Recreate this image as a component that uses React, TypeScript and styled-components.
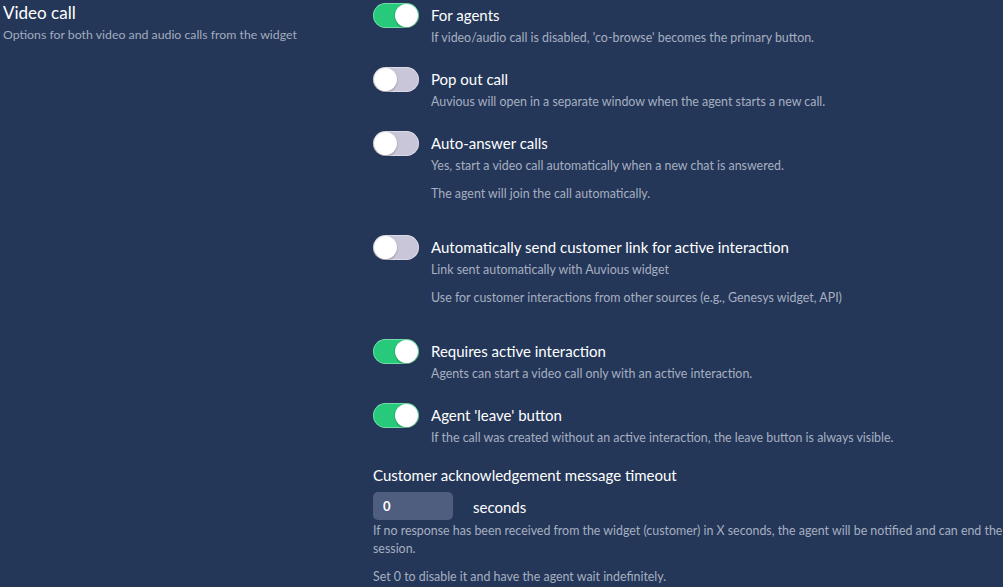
import { createGlobalStyle, styled } from "styled-components"

const GlobalStyle = createGlobalStyle`
  html, body {
    margin: 0;
    padding: 0;
    background: #243759;
  }
  body {
    font-family: Lato, "Noto Sans", sans-serif;
    color: #ffffff;
  }
  p {
    margin: 0;
  }
`

type Option = {
  label: string
  on: boolean
  notes: string[]
}

const options: Option[] = [
  {
    label: "For agents",
    on: true,
    notes: ["If video/audio call is disabled, 'co-browse' becomes the primary button."],
  },
  {
    label: "Pop out call",
    on: false,
    notes: ["Auvious will open in a separate window when the agent starts a new call."],
  },
  {
    label: "Auto-answer calls",
    on: false,
    notes: [
      "Yes, start a video call automatically when a new chat is answered.",
      "The agent will join the call automatically.",
    ],
  },
  {
    label: "Automatically send customer link for active interaction",
    on: false,
    notes: [
      "Link sent automatically with Auvious widget",
      "Use for customer interactions from other sources (e.g., Genesys widget, API)",
    ],
  },
  {
    label: "Requires active interaction",
    on: true,
    notes: ["Agents can start a video call only with an active interaction."],
  },
  {
    label: "Agent 'leave' button",
    on: true,
    notes: ["If the call was created without an active interaction, the leave button is always visible."],
  },
]

const App = () => {
  return (
    <>
      <GlobalStyle />
      <Page>
        <Intro>
          <h2>Video call</h2>
          <p>Options for both video and audio calls from the widget</p>
        </Intro>
        <Settings>
          {options.map((opt) => (
            <OptionRow key={opt.label} $multi={opt.notes.length > 1}>
              <Toggle $on={opt.on}>
                <Knob $on={opt.on} />
              </Toggle>
              <OptionText>
                <OptionLabel>{opt.label}</OptionLabel>
                {opt.notes.map((n) => (
                  <Note key={n}>{n}</Note>
                ))}
              </OptionText>
            </OptionRow>
          ))}
          <Timeout>
            <OptionLabel>Customer acknowledgement message timeout</OptionLabel>
            <InputRow>
              <NumberInput value="0" readOnly />
              <Unit>seconds</Unit>
            </InputRow>
            <Note>
              If no response has been received from the widget (customer) in X seconds, the agent
              will be notified and can end the session.
            </Note>
            <Note>Set 0 to disable it and have the agent wait indefinitely.</Note>
          </Timeout>
        </Settings>
      </Page>
    </>
  )
}

const Page = styled.div`
  display: grid;
  grid-template-columns: 370px 1fr;
  width: 1003px;
  height: 587px;
  overflow: hidden;
  padding-left: 3px;
  box-sizing: border-box;
`

const Intro = styled.div`
  padding-top: 2px;

  h2 {
    margin: 0;
    font-size: 17px;
    font-weight: 400;
    line-height: 22px;
    color: #ffffff;
  }

  p {
    margin-top: 2px;
    font-size: 12.3px;
    line-height: 18px;
    color: #a3abbd;
  }
`

const Settings = styled.div`
  display: flex;
  flex-direction: column;
  padding-top: 4px;
`

const OptionRow = styled.div<{ $multi: boolean }>`
  display: flex;
  align-items: flex-start;
  gap: 12px;
  margin-bottom: ${(p) => (p.$multi ? "23px" : "11px")};
`

const Toggle = styled.div<{ $on: boolean }>`
  position: relative;
  flex: none;
  width: 46px;
  height: 25px;
  margin-top: -1px;
  border-radius: 13px;
  background: ${(p) => (p.$on ? "#27c97b" : "#c9c6d9")};
  box-shadow: inset 0 0 0 1px rgba(255, 255, 255, 0.35);
`

const Knob = styled.span<{ $on: boolean }>`
  position: absolute;
  top: 1px;
  left: ${(p) => (p.$on ? "22px" : "1px")};
  width: 23px;
  height: 23px;
  border-radius: 50%;
  background: #ffffff;
  box-shadow: 0 1px 2px rgba(0, 0, 0, 0.3);
`

const OptionText = styled.div`
  display: flex;
  flex-direction: column;
`

const OptionLabel = styled.p`
  font-size: 15px;
  line-height: 22px;
  color: #ffffff;
  margin-bottom: 3px;
`

const Note = styled.p`
  font-size: 12.4px;
  line-height: 18px;
  color: #a7afc0;
  margin-bottom: 10px;
`

const Timeout = styled.div`
  display: flex;
  flex-direction: column;
  margin-top: -4px;

  ${OptionLabel} {
    margin-bottom: 6px;
  }
`

const InputRow = styled.div`
  display: flex;
  align-items: center;
  gap: 20px;
  margin-bottom: 2px;
`

const NumberInput = styled.input`
  width: 80px;
  height: 28px;
  box-sizing: border-box;
  border: none;
  border-radius: 5px;
  background: #4f5e7e;
  color: #ffffff;
  font-family: Lato, "Noto Sans", sans-serif;
  font-size: 13px;
  font-weight: 700;
  padding: 0 10px;
  outline: none;
`

const Unit = styled.span`
  font-size: 15px;
  line-height: 22px;
  color: #ffffff;
  margin-top: 2px;
`

export default App
